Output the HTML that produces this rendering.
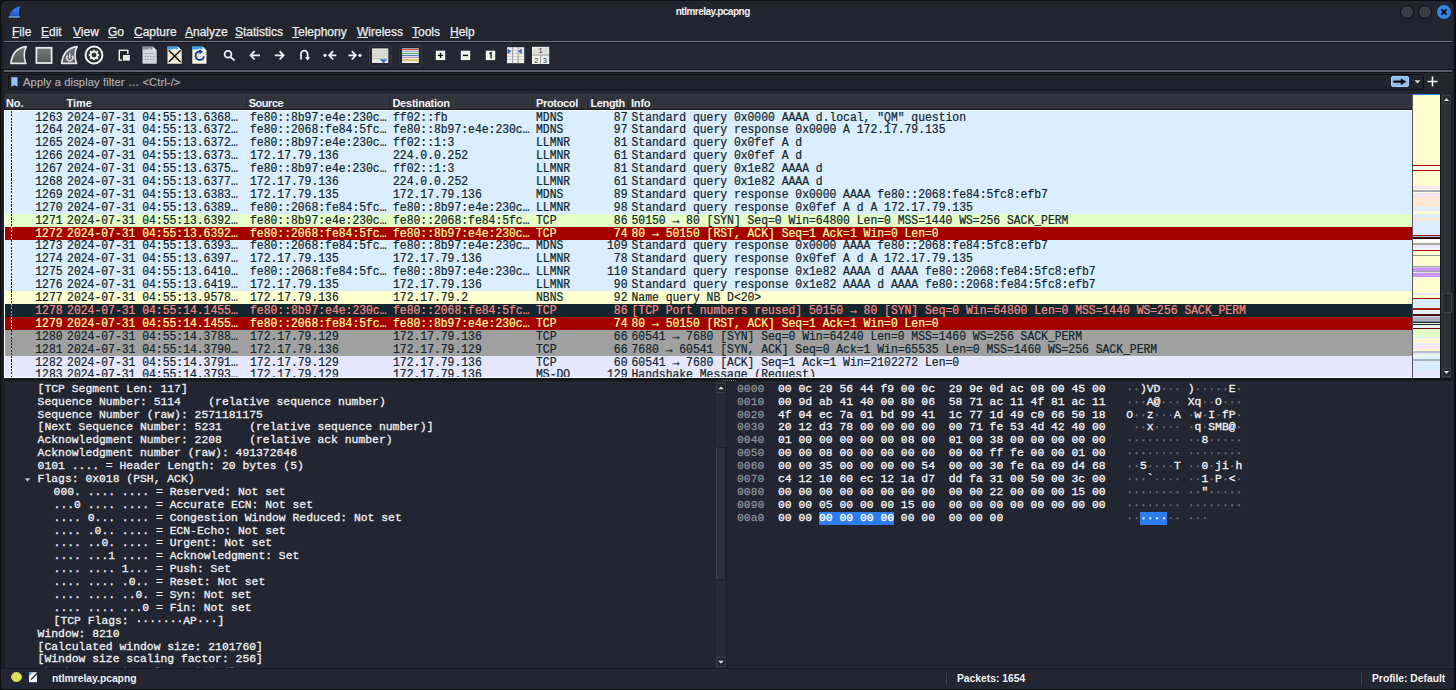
<!DOCTYPE html><html><head><meta charset="utf-8"><style>
*{margin:0;padding:0;box-sizing:border-box}
html,body{width:1456px;height:690px;overflow:hidden;background:#0d0e11}
body{position:relative;font-family:"Liberation Sans",sans-serif}
.a{position:absolute}
.win{position:absolute;left:1px;top:1px;width:1453px;height:688px;background:#22242e;border-radius:5px 5px 3px 3px;overflow:hidden}
.mono{font-family:"Liberation Mono",monospace;font-size:11.39px;white-space:pre;-webkit-text-stroke:0.22px currentColor}
.menu span{position:absolute;top:25px;font-size:12px;color:#eceef2;line-height:14px;-webkit-text-stroke:0.25px #eceef2}
.menu u{text-decoration:none}
.hdr{position:absolute;top:94px;height:16px;background:#31333d;border-top:1px solid #3d3f48;border-bottom:1px solid #17181d}
.hdr span{position:absolute;top:1px;font-size:11.5px;color:#f4f4f6;line-height:14px}
.hsep{position:absolute;top:95px;width:1px;height:14px;background:#272931}
.row{position:absolute;left:5px;width:1407px;height:12.89px}
.row span{position:absolute;transform:scaleY(1.06);transform-origin:0 70%;top:0.6px;line-height:12.89px}
.r{text-align:right}
.asc i{font-style:normal;color:#6e7076}
.sy{-webkit-text-stroke:0.3px currentColor}
</style></head><body>
<div class="win"></div>
<div class="a" style="left:1px;top:24px;width:2px;height:660px;background:#1c1d24"></div>

<div class="a" style="left:675.7px;top:5px;font-size:10px;letter-spacing:-0.5px;font-weight:bold;color:#f2f2f4;line-height:13px">ntlmrelay.pcapng</div>
<div class="a" style="left:1400px;top:5px;width:14px;height:14px;border-radius:50%;background:#3a3c46;border:1.2px solid #0e0f12"></div>
<div class="a" style="left:1418.4px;top:5px;width:14px;height:14px;border-radius:50%;background:#3a3c46;border:1.2px solid #0e0f12"></div>
<div class="a" style="left:1436.8px;top:5px;width:14px;height:14px;border-radius:50%;background:#3584e4"></div>
<svg class="a" style="left:1436.8px;top:5px" width="14" height="14"><path d="M4.4 4.4L9.6 9.6M9.6 4.4L4.4 9.6" stroke="#0b0c10" stroke-width="1.8"/></svg>
<svg class="a" style="left:0;top:0" width="30" height="22" viewBox="0 0 30 22"><defs><linearGradient id="gl" x1="0" y1="0" x2="0" y2="1"><stop offset="0" stop-color="#3a8cf0"/><stop offset="1" stop-color="#1a50c0"/></linearGradient></defs><path d="M20.6 5.8 C14.5 6.8 9.6 11 8.4 17.8 L20.2 17.8 C19.2 14 19.2 9.6 20.6 5.8Z" fill="url(#gl)" stroke="#0d0e12" stroke-width="0.6"/><path d="M8.8 16.6 L19.9 16.6 L20.1 17.6 L8.6 17.6Z" fill="#a6c8f5"/></svg>
<div class="menu">
<span style="left:12px">File</span>
<div class="a" style="left:12px;top:37px;width:7.3px;height:1px;background:#e4e6ea"></div>
<span style="left:41px">Edit</span>
<div class="a" style="left:41px;top:37px;width:8.0px;height:1px;background:#e4e6ea"></div>
<span style="left:73px">View</span>
<div class="a" style="left:73px;top:37px;width:8.0px;height:1px;background:#e4e6ea"></div>
<span style="left:108px">Go</span>
<div class="a" style="left:108px;top:37px;width:9.3px;height:1px;background:#e4e6ea"></div>
<span style="left:134px">Capture</span>
<div class="a" style="left:134px;top:37px;width:8.7px;height:1px;background:#e4e6ea"></div>
<span style="left:185px">Analyze</span>
<div class="a" style="left:185px;top:37px;width:8.0px;height:1px;background:#e4e6ea"></div>
<span style="left:235px">Statistics</span>
<div class="a" style="left:235px;top:37px;width:8.0px;height:1px;background:#e4e6ea"></div>
<span style="left:292px">Telephony</span>
<div class="a" style="left:292px;top:37px;width:7.3px;height:1px;background:#e4e6ea"></div>
<span style="left:357px">Wireless</span>
<div class="a" style="left:357px;top:37px;width:11.3px;height:1px;background:#e4e6ea"></div>
<span style="left:412px">Tools</span>
<div class="a" style="left:412px;top:37px;width:7.3px;height:1px;background:#e4e6ea"></div>
<span style="left:450px">Help</span>
<div class="a" style="left:450px;top:37px;width:8.7px;height:1px;background:#e4e6ea"></div>
</div>
<div class="a" style="left:4px;top:42px;width:1448px;height:28px;background:#242632"></div>
<div class="a" style="left:4px;top:41px;width:1448px;height:1px;background:#74767c"></div>
<div class="a" style="left:4px;top:42px;width:1448px;height:1px;background:#17181f"></div>
<div class="a" style="left:4px;top:69px;width:1448px;height:1px;background:#16171c"></div>
<div class="a" style="left:4px;top:70px;width:1448px;height:2px;background:#5a5d64"></div>
<div class="a" style="left:4px;top:72px;width:1448px;height:1px;background:#131419"></div>
<svg class="a" style="left:0;top:0" width="560" height="72"><defs><linearGradient id="gf" x1="0" y1="0" x2="0" y2="1"><stop offset="0" stop-color="#78797e"/><stop offset="1" stop-color="#545559"/></linearGradient></defs><path d="M10.9 63.4 C11.8 54 17 47.6 26.4 46.6 C23.8 51 23.4 58 25.8 63.4 Z" fill="url(#gf)" stroke="#e8e8ec" stroke-width="1.6" stroke-linejoin="round"/><rect x="36.4" y="47.8" width="15.2" height="15.2" fill="url(#gf)" stroke="#e8e8ec" stroke-width="1.8"/><path d="M61.699999999999996 63.4 C62.599999999999994 54 67.8 47.6 77.19999999999999 46.6 C74.6 51 74.2 58 76.6 63.4 Z" fill="url(#gf)" stroke="#e8e8ec" stroke-width="1.6" stroke-linejoin="round"/><path d="M67.6 55.6 A3.1 3.1 0 1 0 72.2 55.8" fill="none" stroke="#e8e8ec" stroke-width="1.4"/><path d="M69.8 53.6 V58.4" stroke="#e8e8ec" stroke-width="1.4"/><circle cx="94" cy="55" r="8.4" fill="none" stroke="#f4f4f6" stroke-width="2.0"/><polygon points="99.59,53.87 99.59,56.13 98.02,56.51 97.92,56.77 98.75,58.15 97.15,59.75 95.77,58.92 95.51,59.02 95.13,60.59 92.87,60.59 92.49,59.02 92.23,58.92 90.85,59.75 89.25,58.15 90.08,56.77 89.98,56.51 88.41,56.13 88.41,53.87 89.98,53.49 90.08,53.23 89.25,51.85 90.85,50.25 92.23,51.08 92.49,50.98 92.87,49.41 95.13,49.41 95.51,50.98 95.77,51.08 97.15,50.25 98.75,51.85 97.92,53.23 98.02,53.49" fill="#f0f0f2" stroke="#15161b" stroke-width="0.5"/><circle cx="94" cy="55" r="2.1" fill="#2e2e30" stroke="#111" stroke-width="0.6"/><rect x="119.3" y="50.3" width="8.5" height="9.8" fill="none" stroke="#f6f6f6" stroke-width="1.4"/><rect x="122.5" y="54.5" width="7.8" height="6.6" fill="#e8e8e6" stroke="#111" stroke-width="0.8"/><path d="M142.2 46.6 H152.79999999999998 L157.0 50.8 V64 H142.2Z" fill="#d2d3db" stroke="#15161b" stroke-width="0.5"/><path d="M142.2 46.6 H152.79999999999998 L154.79999999999998 48.6 L151.2 49.4 L149.7 48.2 L147.7 49.6 H142.2Z" fill="#8d8f98"/><path d="M152.79999999999998 46.6 L157.0 50.8 H152.79999999999998Z" fill="#e8e9ee"/><path d="M144.8 53.5 H155" stroke="#9c9ea6" stroke-width="1.2" stroke-dasharray="1.6 1"/><path d="M144.8 56.5 H155" stroke="#9c9ea6" stroke-width="1.2" stroke-dasharray="1.6 1"/><path d="M144.8 59.5 H155" stroke="#9c9ea6" stroke-width="1.2" stroke-dasharray="1.6 1"/><path d="M167.2 46.6 H177.79999999999998 L182.0 50.8 V64 H167.2Z" fill="#f5f2e0" stroke="#15161b" stroke-width="0.5"/><path d="M167.2 46.6 H177.79999999999998 L179.79999999999998 48.6 L176.2 49.4 L174.7 48.2 L172.7 49.6 H167.2Z" fill="#3aa2ec"/><path d="M177.79999999999998 46.6 L182.0 50.8 H177.79999999999998Z" fill="#ffffff"/><path d="M169.6 53.5 H180" stroke="#c8c6b8" stroke-width="1" stroke-dasharray="1.6 1"/><path d="M169.6 56.5 H180" stroke="#c8c6b8" stroke-width="1" stroke-dasharray="1.6 1"/><path d="M169.6 59.5 H180" stroke="#c8c6b8" stroke-width="1" stroke-dasharray="1.6 1"/><path d="M168.8 50.2 L180.6 62 M180.6 50.2 L168.8 62" stroke="#111" stroke-width="1.5"/><path d="M192 46.6 H202.6 L206.8 50.8 V64 H192Z" fill="#f5f2e0" stroke="#15161b" stroke-width="0.5"/><path d="M192 46.6 H202.6 L204.6 48.6 L201 49.4 L199.5 48.2 L197.5 49.6 H192Z" fill="#3aa2ec"/><path d="M202.6 46.6 L206.8 50.8 H202.6Z" fill="#ffffff"/><path d="M194.4 53.5 H204.8" stroke="#c8c6b8" stroke-width="1" stroke-dasharray="1.6 1"/><path d="M194.4 56.5 H204.8" stroke="#c8c6b8" stroke-width="1" stroke-dasharray="1.6 1"/><path d="M194.4 59.5 H204.8" stroke="#c8c6b8" stroke-width="1" stroke-dasharray="1.6 1"/><path d="M201.2 51.6 A4.3 4.3 0 1 0 204 56.4" fill="none" stroke="#183e92" stroke-width="1.8"/><path d="M199 49.6 L203.2 51.4 L199.6 54.2Z" fill="#183e92"/><circle cx="228" cy="54.3" r="3.4" fill="none" stroke="#f2f2f4" stroke-width="1.8"/><path d="M230.6 57 L234.6 60.6" stroke="#f2f2f4" stroke-width="1.7"/><path d="M260 55.3 H250.8 M254.6 51.099999999999994 L250.6 55.3 L254.6 59.5" fill="none" stroke="#f2f2f4" stroke-width="1.8"/><path d="M274.8 55.3 H283.4 M279.59999999999997 51.099999999999994 L283.59999999999997 55.3 L279.59999999999997 59.5" fill="none" stroke="#f2f2f4" stroke-width="1.8"/><path d="M301 59.5 V54 A3.3 3.3 0 0 1 307.6 54 V58" fill="none" stroke="#f2f2f4" stroke-width="1.8"/><path d="M305 57.3 H310.2 L307.6 60.6Z" fill="#f2f2f4"/><circle cx="325" cy="55.3" r="1.6" fill="#f2f2f4"/><path d="M336.4 55.3 H329.3 M333.1 51.099999999999994 L329.1 55.3 L333.1 59.5" fill="none" stroke="#f2f2f4" stroke-width="1.8"/><path d="M348.5 55.3 H355.59999999999997 M351.79999999999995 51.099999999999994 L355.79999999999995 55.3 L351.79999999999995 59.5" fill="none" stroke="#f2f2f4" stroke-width="1.8"/><circle cx="360" cy="55.3" r="1.6" fill="#f2f2f4"/><rect x="369.5" y="45.8" width="21.5" height="20.5" rx="2" fill="#23252f" stroke="#3b3d46" stroke-width="1"/><rect x="372" y="48.4" width="16.3" height="14.6" fill="#e6e6e0"/><path d="M372 51 H388.3" stroke="#b8b8b2" stroke-width="0.7"/><path d="M372 53.5 H388.3" stroke="#b8b8b2" stroke-width="0.7"/><path d="M372 56 H388.3" stroke="#b8b8b2" stroke-width="0.7"/><path d="M372 58.5 H388.3" stroke="#b8b8b2" stroke-width="0.7"/><path d="M379.8 59.2 H387.2 L383.5 63.3Z" fill="#2e6dc4"/><rect x="399.7" y="45.8" width="21.5" height="20.5" rx="2" fill="#23252f" stroke="#3b3d46" stroke-width="1"/><rect x="402" y="48.4" width="16.8" height="14.6" fill="#f2f2ee"/><path d="M402 49.6 H418.8" stroke="#e0453a" stroke-width="1.1"/><path d="M402 51.4 H418.8" stroke="#8fb4e0" stroke-width="1.1"/><path d="M402 53.4 H418.8" stroke="#5ab04a" stroke-width="1.1"/><path d="M402 55.4 H418.8" stroke="#4a7ad0" stroke-width="1.1"/><path d="M402 57.3 H418.8" stroke="#b08ad0" stroke-width="1.1"/><path d="M402 59.5 H418.8" stroke="#d8c068" stroke-width="1.1"/><path d="M402 60.8 H418.8" stroke="#d8c068" stroke-width="1.1"/><rect x="435.8" y="50.7" width="9.4" height="9.4" fill="#f4f4f2"/><path d="M440.5 52.8 V58 M437.90000000000003 55.4 H443.1" stroke="#111" stroke-width="1.4"/><rect x="460.8" y="50.7" width="9.4" height="9.4" fill="#f4f4f2"/><path d="M462.90000000000003 55.4 H468.1" stroke="#111" stroke-width="1.5"/><rect x="485.8" y="50.7" width="9.4" height="9.4" fill="#f4f4f2"/><path d="M489.40000000000003 53.6 L491.0 52.6 V58.4" fill="none" stroke="#111" stroke-width="1.3"/><rect x="507" y="47.2" width="17.2" height="16" fill="#eeeeea"/><path d="M507 50.5 H524.2" stroke="#c0c0bc" stroke-width="0.6"/><path d="M507 53.5 H524.2" stroke="#c0c0bc" stroke-width="0.6"/><path d="M507 56.5 H524.2" stroke="#c0c0bc" stroke-width="0.6"/><path d="M507 59.5 H524.2" stroke="#c0c0bc" stroke-width="0.6"/><path d="M512.6 47.2 V63.2 M518.2 47.2 V63.2" stroke="#8a8a88" stroke-width="0.8"/><path d="M507.6 48.6 L511.2 51.3 L507.6 54Z M521.8 48.6 L518.2 51.3 L521.8 54Z" fill="#2a64c0"/><rect x="532" y="46.8" width="17.2" height="17.2" fill="#f0f0ee"/><rect x="532.8" y="47.6" width="15.6" height="6.6" fill="#dcdcda"/><path d="M532 55 H549.2 M540.6 55 V64" stroke="#8a8a88" stroke-width="0.9"/><text x="540.6" y="53.3" font-size="7.5" text-anchor="middle" fill="#333" font-family="Liberation Sans">1</text><text x="536.4" y="62.6" font-size="7.5" text-anchor="middle" fill="#333" font-family="Liberation Sans">2</text><text x="544.9" y="62.6" font-size="7.5" text-anchor="middle" fill="#333" font-family="Liberation Sans">3</text></svg>
<div class="a" style="left:7.5px;top:73.5px;width:1416px;height:16px;background:#22242d;border:1px solid #101116;border-radius:3px"></div>
<div class="a" style="left:9px;top:75px;width:12px;height:14px;border-right:1px solid #15161c"></div>
<svg class="a" style="left:11px;top:77px" width="7" height="10"><path d="M0.3 0.3H6.5V9.6L3.4 8.2L0.3 9.6Z" fill="#92c0f2"/></svg>
<div class="a" style="left:23px;top:75px;font-size:11.2px;letter-spacing:0.1px;color:#aeb0b6;line-height:14px;-webkit-text-stroke:0.15px #aeb0b6">Apply a display filter … &lt;Ctrl-/&gt;</div>
<div class="a" style="left:1391px;top:76.3px;width:18px;height:10.6px;background:#92bbe8;border:1px solid #a6d0fa;border-radius:2px"></div>
<svg class="a" style="left:1386px;top:72px" width="40" height="20"><path d="M8.3 9.6H15.6" stroke="#0b0c10" stroke-width="2.4" stroke-linecap="round"/><path d="M15 7 L19.9 9.6 L15 12.6Z" fill="#0b0c10" stroke="#0b0c10" stroke-width="0.6" stroke-linejoin="round"/></svg>
<svg class="a" style="left:1413.5px;top:80px" width="7" height="4"><path d="M0.5 0.3H6.5L3.5 3.5Z" fill="#d8d9dc"/></svg>
<svg class="a" style="left:1427px;top:76px" width="11" height="11"><path d="M5.5 0.5V10.5M0.5 5.5H10.5" stroke="#f0f0f2" stroke-width="1.6"/></svg>
<div class="hdr" style="left:5px;width:1407px"></div>
<div class="a" style="left:6px;top:95.5px;font-size:11px;letter-spacing:-0.07px;font-weight:bold;color:#f4f4f6;line-height:14px">No.</div>
<div class="a" style="left:66.6px;top:95.5px;font-size:11px;letter-spacing:-0.1px;font-weight:bold;color:#f4f4f6;line-height:14px">Time</div>
<div class="a" style="left:248.7px;top:95.5px;font-size:11px;letter-spacing:-0.45px;font-weight:bold;color:#f4f4f6;line-height:14px">Source</div>
<div class="a" style="left:392.4px;top:95.5px;font-size:11px;letter-spacing:-0.23px;font-weight:bold;color:#f4f4f6;line-height:14px">Destination</div>
<div class="a" style="left:536px;top:95.5px;font-size:11px;letter-spacing:-0.33px;font-weight:bold;color:#f4f4f6;line-height:14px">Protocol</div>
<div class="a" style="left:590.5px;top:95.5px;font-size:11px;letter-spacing:-0.38px;font-weight:bold;color:#f4f4f6;line-height:14px">Length</div>
<div class="a" style="left:631px;top:95.5px;font-size:11px;letter-spacing:-0.2px;font-weight:bold;color:#f4f4f6;line-height:14px">Info</div>
<div class="hsep" style="left:64px"></div>
<div class="hsep" style="left:246px"></div>
<div class="hsep" style="left:389px"></div>
<div class="hsep" style="left:532px"></div>
<div class="hsep" style="left:587px"></div>
<div class="hsep" style="left:628px"></div>
<div class="a" style="left:4px;top:110px;width:1409px;height:268px;background:#ffffff"></div>
<div class="a" style="left:5px;top:111px;width:1407px;height:266px;overflow:hidden">
<div class="row mono" style="left:0;top:0.00px;background:#daeeff;color:#12272e"><span class="r" style="left:0;width:57.6px">1263</span><span style="left:62.1px">2024-07-31 04:55:13.6368…</span><span style="left:245px">fe80::8b97:e4e:230c…</span><span style="left:388px">ff02::fb</span><span style="left:531px">MDNS</span><span class="r" style="left:585px;width:37.5px">87</span><span style="left:626.5px">Standard query 0x0000 AAAA d.local, "QM" question</span><i style="position:absolute;left:6px;top:0;width:1px;height:100%;background:repeating-linear-gradient(to bottom,#12272e 0 2.2px,transparent 2.2px 3.3px)"></i></div>
<div class="row mono" style="left:0;top:12.89px;background:#daeeff;color:#12272e"><span class="r" style="left:0;width:57.6px">1264</span><span style="left:62.1px">2024-07-31 04:55:13.6372…</span><span style="left:245px">fe80::2068:fe84:5fc…</span><span style="left:388px">fe80::8b97:e4e:230c…</span><span style="left:531px">MDNS</span><span class="r" style="left:585px;width:37.5px">97</span><span style="left:626.5px">Standard query response 0x0000 A 172.17.79.135</span><i style="position:absolute;left:6px;top:0;width:1px;height:100%;background:repeating-linear-gradient(to bottom,#12272e 0 2.2px,transparent 2.2px 3.3px)"></i></div>
<div class="row mono" style="left:0;top:25.78px;background:#daeeff;color:#12272e"><span class="r" style="left:0;width:57.6px">1265</span><span style="left:62.1px">2024-07-31 04:55:13.6372…</span><span style="left:245px">fe80::8b97:e4e:230c…</span><span style="left:388px">ff02::1:3</span><span style="left:531px">LLMNR</span><span class="r" style="left:585px;width:37.5px">81</span><span style="left:626.5px">Standard query 0x0fef A d</span><i style="position:absolute;left:6px;top:0;width:1px;height:100%;background:repeating-linear-gradient(to bottom,#12272e 0 2.2px,transparent 2.2px 3.3px)"></i></div>
<div class="row mono" style="left:0;top:38.67px;background:#daeeff;color:#12272e"><span class="r" style="left:0;width:57.6px">1266</span><span style="left:62.1px">2024-07-31 04:55:13.6373…</span><span style="left:245px">172.17.79.136</span><span style="left:388px">224.0.0.252</span><span style="left:531px">LLMNR</span><span class="r" style="left:585px;width:37.5px">61</span><span style="left:626.5px">Standard query 0x0fef A d</span><i style="position:absolute;left:6px;top:0;width:1px;height:100%;background:repeating-linear-gradient(to bottom,#12272e 0 2.2px,transparent 2.2px 3.3px)"></i></div>
<div class="row mono" style="left:0;top:51.56px;background:#daeeff;color:#12272e"><span class="r" style="left:0;width:57.6px">1267</span><span style="left:62.1px">2024-07-31 04:55:13.6375…</span><span style="left:245px">fe80::8b97:e4e:230c…</span><span style="left:388px">ff02::1:3</span><span style="left:531px">LLMNR</span><span class="r" style="left:585px;width:37.5px">81</span><span style="left:626.5px">Standard query 0x1e82 AAAA d</span><i style="position:absolute;left:6px;top:0;width:1px;height:100%;background:repeating-linear-gradient(to bottom,#12272e 0 2.2px,transparent 2.2px 3.3px)"></i></div>
<div class="row mono" style="left:0;top:64.45px;background:#daeeff;color:#12272e"><span class="r" style="left:0;width:57.6px">1268</span><span style="left:62.1px">2024-07-31 04:55:13.6377…</span><span style="left:245px">172.17.79.136</span><span style="left:388px">224.0.0.252</span><span style="left:531px">LLMNR</span><span class="r" style="left:585px;width:37.5px">61</span><span style="left:626.5px">Standard query 0x1e82 AAAA d</span><i style="position:absolute;left:6px;top:0;width:1px;height:100%;background:repeating-linear-gradient(to bottom,#12272e 0 2.2px,transparent 2.2px 3.3px)"></i></div>
<div class="row mono" style="left:0;top:77.34px;background:#daeeff;color:#12272e"><span class="r" style="left:0;width:57.6px">1269</span><span style="left:62.1px">2024-07-31 04:55:13.6383…</span><span style="left:245px">172.17.79.135</span><span style="left:388px">172.17.79.136</span><span style="left:531px">MDNS</span><span class="r" style="left:585px;width:37.5px">89</span><span style="left:626.5px">Standard query response 0x0000 AAAA fe80::2068:fe84:5fc8:efb7</span><i style="position:absolute;left:6px;top:0;width:1px;height:100%;background:repeating-linear-gradient(to bottom,#12272e 0 2.2px,transparent 2.2px 3.3px)"></i></div>
<div class="row mono" style="left:0;top:90.23px;background:#daeeff;color:#12272e"><span class="r" style="left:0;width:57.6px">1270</span><span style="left:62.1px">2024-07-31 04:55:13.6389…</span><span style="left:245px">fe80::2068:fe84:5fc…</span><span style="left:388px">fe80::8b97:e4e:230c…</span><span style="left:531px">LLMNR</span><span class="r" style="left:585px;width:37.5px">98</span><span style="left:626.5px">Standard query response 0x0fef A d A 172.17.79.135</span><i style="position:absolute;left:6px;top:0;width:1px;height:100%;background:repeating-linear-gradient(to bottom,#12272e 0 2.2px,transparent 2.2px 3.3px)"></i></div>
<div class="row mono" style="left:0;top:103.12px;background:#e4ffc7;color:#12272e"><span class="r" style="left:0;width:57.6px">1271</span><span style="left:62.1px">2024-07-31 04:55:13.6392…</span><span style="left:245px">fe80::8b97:e4e:230c…</span><span style="left:388px">fe80::2068:fe84:5fc…</span><span style="left:531px">TCP</span><span class="r" style="left:585px;width:37.5px">86</span><span style="left:626.5px">50150 → 80 [SYN] Seq=0 Win=64800 Len=0 MSS=1440 WS=256 SACK_PERM</span><i style="position:absolute;left:6px;top:0;width:1px;height:100%;background:repeating-linear-gradient(to bottom,#12272e 0 2.2px,transparent 2.2px 3.3px)"></i></div>
<div class="row mono" style="left:0;top:116.01px;background:#a40000;color:#fffc9c"><span class="r" style="left:0;width:57.6px">1272</span><span style="left:62.1px">2024-07-31 04:55:13.6392…</span><span style="left:245px">fe80::2068:fe84:5fc…</span><span style="left:388px">fe80::8b97:e4e:230c…</span><span style="left:531px">TCP</span><span class="r" style="left:585px;width:37.5px">74</span><span style="left:626.5px">80 → 50150 [RST, ACK] Seq=1 Ack=1 Win=0 Len=0</span><i style="position:absolute;left:6px;top:0;width:1px;height:100%;background:repeating-linear-gradient(to bottom,#fffc9c 0 2.2px,transparent 2.2px 3.3px)"></i></div>
<div class="row mono" style="left:0;top:128.90px;background:#daeeff;color:#12272e"><span class="r" style="left:0;width:57.6px">1273</span><span style="left:62.1px">2024-07-31 04:55:13.6393…</span><span style="left:245px">fe80::2068:fe84:5fc…</span><span style="left:388px">fe80::8b97:e4e:230c…</span><span style="left:531px">MDNS</span><span class="r" style="left:585px;width:37.5px">109</span><span style="left:626.5px">Standard query response 0x0000 AAAA fe80::2068:fe84:5fc8:efb7</span><i style="position:absolute;left:6px;top:0;width:1px;height:100%;background:repeating-linear-gradient(to bottom,#12272e 0 2.2px,transparent 2.2px 3.3px)"></i></div>
<div class="row mono" style="left:0;top:141.79px;background:#daeeff;color:#12272e"><span class="r" style="left:0;width:57.6px">1274</span><span style="left:62.1px">2024-07-31 04:55:13.6397…</span><span style="left:245px">172.17.79.135</span><span style="left:388px">172.17.79.136</span><span style="left:531px">LLMNR</span><span class="r" style="left:585px;width:37.5px">78</span><span style="left:626.5px">Standard query response 0x0fef A d A 172.17.79.135</span><i style="position:absolute;left:6px;top:0;width:1px;height:100%;background:repeating-linear-gradient(to bottom,#12272e 0 2.2px,transparent 2.2px 3.3px)"></i></div>
<div class="row mono" style="left:0;top:154.68px;background:#daeeff;color:#12272e"><span class="r" style="left:0;width:57.6px">1275</span><span style="left:62.1px">2024-07-31 04:55:13.6410…</span><span style="left:245px">fe80::2068:fe84:5fc…</span><span style="left:388px">fe80::8b97:e4e:230c…</span><span style="left:531px">LLMNR</span><span class="r" style="left:585px;width:37.5px">110</span><span style="left:626.5px">Standard query response 0x1e82 AAAA d AAAA fe80::2068:fe84:5fc8:efb7</span><i style="position:absolute;left:6px;top:0;width:1px;height:100%;background:repeating-linear-gradient(to bottom,#12272e 0 2.2px,transparent 2.2px 3.3px)"></i></div>
<div class="row mono" style="left:0;top:167.57px;background:#daeeff;color:#12272e"><span class="r" style="left:0;width:57.6px">1276</span><span style="left:62.1px">2024-07-31 04:55:13.6419…</span><span style="left:245px">172.17.79.135</span><span style="left:388px">172.17.79.136</span><span style="left:531px">LLMNR</span><span class="r" style="left:585px;width:37.5px">90</span><span style="left:626.5px">Standard query response 0x1e82 AAAA d AAAA fe80::2068:fe84:5fc8:efb7</span><i style="position:absolute;left:6px;top:0;width:1px;height:100%;background:repeating-linear-gradient(to bottom,#12272e 0 2.2px,transparent 2.2px 3.3px)"></i></div>
<div class="row mono" style="left:0;top:180.46px;background:#feffd0;color:#12272e"><span class="r" style="left:0;width:57.6px">1277</span><span style="left:62.1px">2024-07-31 04:55:13.9578…</span><span style="left:245px">172.17.79.136</span><span style="left:388px">172.17.79.2</span><span style="left:531px">NBNS</span><span class="r" style="left:585px;width:37.5px">92</span><span style="left:626.5px">Name query NB D&lt;20&gt;</span><i style="position:absolute;left:6px;top:0;width:1px;height:100%;background:repeating-linear-gradient(to bottom,#12272e 0 2.2px,transparent 2.2px 3.3px)"></i></div>
<div class="row mono" style="left:0;top:193.35px;background:#12272e;color:#f78787"><span class="r" style="left:0;width:57.6px">1278</span><span style="left:62.1px">2024-07-31 04:55:14.1455…</span><span style="left:245px">fe80::8b97:e4e:230c…</span><span style="left:388px">fe80::2068:fe84:5fc…</span><span style="left:531px">TCP</span><span class="r" style="left:585px;width:37.5px">86</span><span style="left:626.5px">[TCP Port numbers reused] 50150 → 80 [SYN] Seq=0 Win=64800 Len=0 MSS=1440 WS=256 SACK_PERM</span><i style="position:absolute;left:6px;top:0;width:1px;height:100%;background:repeating-linear-gradient(to bottom,#f78787 0 2.2px,transparent 2.2px 3.3px)"></i></div>
<div class="row mono" style="left:0;top:206.24px;background:#a40000;color:#fffc9c"><span class="r" style="left:0;width:57.6px">1279</span><span style="left:62.1px">2024-07-31 04:55:14.1455…</span><span style="left:245px">fe80::2068:fe84:5fc…</span><span style="left:388px">fe80::8b97:e4e:230c…</span><span style="left:531px">TCP</span><span class="r" style="left:585px;width:37.5px">74</span><span style="left:626.5px">80 → 50150 [RST, ACK] Seq=1 Ack=1 Win=0 Len=0</span><i style="position:absolute;left:6px;top:0;width:1px;height:100%;background:repeating-linear-gradient(to bottom,#fffc9c 0 2.2px,transparent 2.2px 3.3px)"></i></div>
<div class="row mono" style="left:0;top:219.13px;background:#a0a0a0;color:#12272e"><span class="r" style="left:0;width:57.6px">1280</span><span style="left:62.1px">2024-07-31 04:55:14.3788…</span><span style="left:245px">172.17.79.129</span><span style="left:388px">172.17.79.136</span><span style="left:531px">TCP</span><span class="r" style="left:585px;width:37.5px">66</span><span style="left:626.5px">60541 → 7680 [SYN] Seq=0 Win=64240 Len=0 MSS=1460 WS=256 SACK_PERM</span><i style="position:absolute;left:6px;top:0;width:1px;height:100%;background:repeating-linear-gradient(to bottom,#12272e 0 2.2px,transparent 2.2px 3.3px)"></i></div>
<div class="row mono" style="left:0;top:232.02px;background:#a0a0a0;color:#12272e"><span class="r" style="left:0;width:57.6px">1281</span><span style="left:62.1px">2024-07-31 04:55:14.3790…</span><span style="left:245px">172.17.79.136</span><span style="left:388px">172.17.79.129</span><span style="left:531px">TCP</span><span class="r" style="left:585px;width:37.5px">66</span><span style="left:626.5px">7680 → 60541 [SYN, ACK] Seq=0 Ack=1 Win=65535 Len=0 MSS=1460 WS=256 SACK_PERM</span><i style="position:absolute;left:6px;top:0;width:1px;height:100%;background:repeating-linear-gradient(to bottom,#12272e 0 2.2px,transparent 2.2px 3.3px)"></i></div>
<div class="row mono" style="left:0;top:244.91px;background:#e7e6ff;color:#12272e"><span class="r" style="left:0;width:57.6px">1282</span><span style="left:62.1px">2024-07-31 04:55:14.3791…</span><span style="left:245px">172.17.79.129</span><span style="left:388px">172.17.79.136</span><span style="left:531px">TCP</span><span class="r" style="left:585px;width:37.5px">60</span><span style="left:626.5px">60541 → 7680 [ACK] Seq=1 Ack=1 Win=2102272 Len=0</span><i style="position:absolute;left:6px;top:0;width:1px;height:100%;background:repeating-linear-gradient(to bottom,#12272e 0 2.2px,transparent 2.2px 3.3px)"></i></div>
<div class="row mono" style="left:0;top:257.80px;background:#e7e6ff;color:#12272e"><span class="r" style="left:0;width:57.6px">1283</span><span style="left:62.1px">2024-07-31 04:55:14.3793…</span><span style="left:245px">172.17.79.129</span><span style="left:388px">172.17.79.136</span><span style="left:531px">MS-DO</span><span class="r" style="left:585px;width:37.5px">129</span><span style="left:626.5px">Handshake Message (Request)</span><i style="position:absolute;left:6px;top:0;width:1px;height:100%;background:repeating-linear-gradient(to bottom,#12272e 0 2.2px,transparent 2.2px 3.3px)"></i></div>
</div>
<div class="a" style="left:1412px;top:94px;width:1px;height:284px;background:#55575c"></div>
<svg class="a" style="left:1413px;top:94px" width="27" height="284"><rect x="0" y="0" width="28" height="284" fill="#fdfdd0"/><rect x="0" y="0" width="28" height="1.2" fill="#3584e4"/><rect x="0" y="1" width="28" height="70" fill="#fdfdd0"/><rect x="0" y="71" width="28" height="1" fill="#a40000"/><rect x="0" y="72" width="28" height="4" fill="#fafae8"/><rect x="0" y="76" width="28" height="1" fill="#a40000"/><rect x="0" y="92" width="28" height="3" fill="#f4e6ee"/><rect x="0" y="96" width="28" height="2" fill="#a8a8b4"/><rect x="0" y="99" width="28" height="2" fill="#ece6f8"/><rect x="0" y="101" width="28" height="3" fill="#fce4e4"/><rect x="0" y="104" width="28" height="9" fill="#fde8d2"/><rect x="0" y="113" width="28" height="2" fill="#daeeff"/><rect x="0" y="115" width="28" height="2" fill="#e7e6ff"/><rect x="0" y="117" width="28" height="3" fill="#fdfdd0"/><rect x="0" y="120" width="28" height="4" fill="#daeeff"/><rect x="0" y="124" width="28" height="3" fill="#fde8d2"/><rect x="0" y="127" width="28" height="1" fill="#daeeff"/><rect x="0" y="128" width="28" height="13" fill="#daeeff"/><rect x="0" y="141" width="28" height="1" fill="#b01010"/><rect x="0" y="142" width="28" height="1" fill="#8cc8d8"/><rect x="0" y="143" width="28" height="1" fill="#5a0808"/><rect x="0" y="144" width="28" height="1" fill="#12080a"/><rect x="0" y="145" width="28" height="1" fill="#f8f8f8"/><rect x="0" y="146" width="28" height="3" fill="#fafaf0"/><rect x="0" y="149" width="28" height="2" fill="#a8a8a0"/><rect x="0" y="151" width="28" height="3" fill="#ece8ff"/><rect x="0" y="154" width="28" height="2" fill="#f4f4f8"/><rect x="0" y="156" width="28" height="1" fill="#b01010"/><rect x="0" y="157" width="28" height="4" fill="#fdfdd0"/><rect x="0" y="161" width="28" height="1" fill="#909098"/><rect x="0" y="162" width="28" height="10" fill="#fdfdd0"/><rect x="0" y="172" width="28" height="1" fill="#a0a0a0"/><rect x="0" y="173" width="28" height="1" fill="#d0c0e8"/><rect x="0" y="174" width="28" height="3" fill="#c797ff"/><rect x="0" y="177" width="28" height="1" fill="#a0a8a0"/><rect x="0" y="178" width="28" height="1" fill="#e8e0f0"/><rect x="0" y="179" width="28" height="4" fill="#c797ff"/><rect x="0" y="183" width="28" height="16" fill="#fdfdd0"/><rect x="0" y="199" width="28" height="2" fill="#e7e6ff"/><rect x="0" y="201" width="28" height="3" fill="#fdfdd0"/><rect x="0" y="204" width="28" height="1" fill="#a40000"/><rect x="0" y="205" width="28" height="9" fill="#daeeff"/><rect x="0" y="214" width="28" height="2" fill="#b02010"/><rect x="0" y="216" width="28" height="4" fill="#e4f4fa"/><rect x="0" y="220" width="28" height="2" fill="#5a0a0a"/><rect x="0" y="222" width="28" height="1" fill="#c8dcea"/><rect x="0" y="223" width="28" height="4" fill="#b0b0bc"/><rect x="0" y="227" width="28" height="1" fill="#6a8aa0"/><rect x="0" y="228" width="28" height="1" fill="#12272e"/><rect x="0" y="229" width="28" height="1" fill="#fdfdd0"/><rect x="0" y="230" width="28" height="1" fill="#12272e"/><rect x="0" y="231" width="28" height="3" fill="#e4f4fa"/><rect x="0" y="234" width="28" height="1" fill="#6a0a0a"/><rect x="0" y="235" width="28" height="8" fill="#e4ffc7"/><rect x="0" y="243" width="28" height="1" fill="#daeeff"/><rect x="0" y="244" width="28" height="5" fill="#fdf4d0"/><rect x="0" y="249" width="28" height="2" fill="#e8f0f0"/><rect x="0" y="251" width="28" height="4" fill="#fbe4f8"/><rect x="0" y="255" width="28" height="2" fill="#fdf4d0"/><rect x="0" y="257" width="28" height="2" fill="#b8b8c8"/><rect x="0" y="259" width="28" height="2" fill="#daeeff"/><rect x="0" y="261" width="28" height="1" fill="#fdf4d0"/><rect x="0" y="262" width="28" height="3" fill="#dff2ff"/><rect x="0" y="265" width="28" height="2" fill="#a8b0b8"/><rect x="0" y="267" width="28" height="9" fill="#daeeff"/><rect x="0" y="276" width="28" height="7" fill="#e7e6ff"/><rect x="0" y="283" width="28" height="1" fill="#f0f0f0"/></svg>
<div class="a" style="left:1440px;top:94px;width:1px;height:284px;background:#15161c"></div>
<div class="a" style="left:1441px;top:94px;width:11px;height:284px;background:#2d3039;border-right:1px solid #1b1c22"></div>
<div class="a" style="left:1442px;top:95px;width:9px;height:9px;background:#2a2c35;border:1px solid #3a3c45"></div>
<svg class="a" style="left:1442px;top:95px" width="9" height="9"><path d="M1.8 6 L4.5 3.3 L7.2 6Z" fill="#e8e8ea"/></svg>
<div class="a" style="left:1442px;top:292.5px;width:9.5px;height:20px;background:#272933;border:1px solid #3e4049"></div>
<div class="a" style="left:1442px;top:368px;width:9px;height:9px;background:#2a2c35;border:1px solid #3a3c45"></div>
<svg class="a" style="left:1442px;top:368px" width="9" height="9"><path d="M1.8 3 L4.5 5.7 L7.2 3Z" fill="#e8e8ea"/></svg>
<div class="a" style="left:4px;top:378px;width:1448px;height:2px;background:#17181e"></div>
<div class="a" style="left:4px;top:380px;width:713px;height:288px;background:#232531;border-left:1px solid #1a1b22;border-top:1px solid #15161c"></div>
<div class="a" style="left:5px;top:381px;width:711px;height:287px;overflow:hidden">
<div class="a mono sy" style="left:32.6px;top:1.80px;line-height:12.89px;color:#eeeff2">[TCP Segment Len: 117]</div>
<div class="a mono sy" style="left:32.6px;top:14.69px;line-height:12.89px;color:#eeeff2">Sequence Number: 5114    (relative sequence number)</div>
<div class="a mono sy" style="left:32.6px;top:27.58px;line-height:12.89px;color:#eeeff2">Sequence Number (raw): 2571181175</div>
<div class="a mono sy" style="left:32.6px;top:40.47px;line-height:12.89px;color:#eeeff2">[Next Sequence Number: 5231    (relative sequence number)]</div>
<div class="a mono sy" style="left:32.6px;top:53.36px;line-height:12.89px;color:#eeeff2">Acknowledgment Number: 2208    (relative ack number)</div>
<div class="a mono sy" style="left:32.6px;top:66.25px;line-height:12.89px;color:#eeeff2">Acknowledgment number (raw): 491372646</div>
<div class="a mono sy" style="left:32.6px;top:79.14px;line-height:12.89px;color:#eeeff2">0101 .... = Header Length: 20 bytes (5)</div>
<div class="a mono sy" style="left:32.6px;top:92.03px;line-height:12.89px;color:#eeeff2">Flags: 0x018 (PSH, ACK)</div>
<div class="a mono sy" style="left:48.6px;top:104.92px;line-height:12.89px;color:#eeeff2">000. .... .... = Reserved: Not set</div>
<div class="a mono sy" style="left:48.6px;top:117.81px;line-height:12.89px;color:#eeeff2">...0 .... .... = Accurate ECN: Not set</div>
<div class="a mono sy" style="left:48.6px;top:130.70px;line-height:12.89px;color:#eeeff2">.... 0... .... = Congestion Window Reduced: Not set</div>
<div class="a mono sy" style="left:48.6px;top:143.59px;line-height:12.89px;color:#eeeff2">.... .0.. .... = ECN-Echo: Not set</div>
<div class="a mono sy" style="left:48.6px;top:156.48px;line-height:12.89px;color:#eeeff2">.... ..0. .... = Urgent: Not set</div>
<div class="a mono sy" style="left:48.6px;top:169.37px;line-height:12.89px;color:#eeeff2">.... ...1 .... = Acknowledgment: Set</div>
<div class="a mono sy" style="left:48.6px;top:182.26px;line-height:12.89px;color:#eeeff2">.... .... 1... = Push: Set</div>
<div class="a mono sy" style="left:48.6px;top:195.15px;line-height:12.89px;color:#eeeff2">.... .... .0.. = Reset: Not set</div>
<div class="a mono sy" style="left:48.6px;top:208.04px;line-height:12.89px;color:#eeeff2">.... .... ..0. = Syn: Not set</div>
<div class="a mono sy" style="left:48.6px;top:220.93px;line-height:12.89px;color:#eeeff2">.... .... ...0 = Fin: Not set</div>
<div class="a mono sy" style="left:48.6px;top:233.82px;line-height:12.89px;color:#eeeff2">[TCP Flags: ·······AP···]</div>
<div class="a mono sy" style="left:32.6px;top:246.71px;line-height:12.89px;color:#eeeff2">Window: 8210</div>
<div class="a mono sy" style="left:32.6px;top:259.60px;line-height:12.89px;color:#eeeff2">[Calculated window size: 2101760]</div>
<div class="a mono sy" style="left:32.6px;top:272.49px;line-height:12.89px;color:#eeeff2">[Window size scaling factor: 256]</div>
<div class="a mono sy" style="left:32.6px;top:286.38px;line-height:12.89px;color:#eeeff2">Checksum: 0xd8a5 [unverified]</div>
</div>
<svg class="a" style="left:24px;top:476.7px" width="7" height="6"><path d="M0.8 1.2 H6.2 L3.5 4.4Z" fill="#c8c9cc"/></svg>
<div class="a" style="left:716px;top:381px;width:10px;height:287px;background:#2a2c35"></div>
<div class="a" style="left:716px;top:383px;width:10px;height:10px;background:#262830;border:1px solid #3a3c45"></div>
<svg class="a" style="left:716px;top:383px" width="10" height="10"><path d="M2.3 6.3 L5 3.6 L7.7 6.3Z" fill="#e8e8ea"/></svg>
<div class="a" style="left:716px;top:393px;width:10px;height:264px;background:#2a2c35"></div>
<div class="a" style="left:716px;top:446.5px;width:10px;height:133px;background:#2d3039;border:1px solid #1f2028;border-left:1px solid #454750"></div>
<div class="a" style="left:716px;top:657px;width:10px;height:10px;background:#262830;border:1px solid #3a3c45"></div>
<svg class="a" style="left:716px;top:657px" width="10" height="10"><path d="M2.3 3.7 L5 6.4 L7.7 3.7Z" fill="#e8e8ea"/></svg>
<div class="a" style="left:726px;top:381px;width:1px;height:287px;background:#1d1f27"></div>
<div class="a" style="left:728px;top:519px;width:0;height:11px;border-left:1px dotted #6a6c74"></div>
<div class="a" style="left:728px;top:380px;width:724px;height:288px;background:#232531;border-top:1px solid #15161c;border-right:1px solid #2c2e37;border-bottom:1px solid #2c2e37"></div>
<div class="a" style="left:723px;top:380px;width:13px;height:0;border-top:1px dotted #6a6c74"></div>
<div class="a mono sy" style="left:737px;top:382.80px;line-height:12.89px;color:#8c8d92">0000</div>
<div class="a mono sy" style="left:778px;top:382.80px;line-height:12.89px;color:#f4f4f6">00 0c 29 56 44 f9 00 0c  29 9e 0d ac 08 00 45 00</div>
<div class="a mono asc sy" style="left:1126.3px;top:382.80px;line-height:12.89px;color:#f4f4f6"><i>·</i><i>·</i>)VD<i>·</i><i>·</i><i>·</i> )<i>·</i><i>·</i><i>·</i><i>·</i><i>·</i>E<i>·</i></div>
<div class="a mono sy" style="left:737px;top:395.69px;line-height:12.89px;color:#8c8d92">0010</div>
<div class="a mono sy" style="left:778px;top:395.69px;line-height:12.89px;color:#f4f4f6">00 9d ab 41 40 00 80 06  58 71 ac 11 4f 81 ac 11</div>
<div class="a mono asc sy" style="left:1126.3px;top:395.69px;line-height:12.89px;color:#f4f4f6"><i>·</i><i>·</i><i>·</i>A@<i>·</i><i>·</i><i>·</i> Xq<i>·</i><i>·</i>O<i>·</i><i>·</i><i>·</i></div>
<div class="a mono sy" style="left:737px;top:408.58px;line-height:12.89px;color:#8c8d92">0020</div>
<div class="a mono sy" style="left:778px;top:408.58px;line-height:12.89px;color:#f4f4f6">4f 04 ec 7a 01 bd 99 41  1c 77 1d 49 c0 66 50 18</div>
<div class="a mono asc sy" style="left:1126.3px;top:408.58px;line-height:12.89px;color:#f4f4f6">O<i>·</i><i>·</i>z<i>·</i><i>·</i><i>·</i>A <i>·</i>w<i>·</i>I<i>·</i>fP<i>·</i></div>
<div class="a mono sy" style="left:737px;top:421.47px;line-height:12.89px;color:#8c8d92">0030</div>
<div class="a mono sy" style="left:778px;top:421.47px;line-height:12.89px;color:#f4f4f6">20 12 d3 78 00 00 00 00  00 71 fe 53 4d 42 40 00</div>
<div class="a mono asc sy" style="left:1126.3px;top:421.47px;line-height:12.89px;color:#f4f4f6"> <i>·</i><i>·</i>x<i>·</i><i>·</i><i>·</i><i>·</i> <i>·</i>q<i>·</i>SMB@<i>·</i></div>
<div class="a mono sy" style="left:737px;top:434.36px;line-height:12.89px;color:#8c8d92">0040</div>
<div class="a mono sy" style="left:778px;top:434.36px;line-height:12.89px;color:#f4f4f6">01 00 00 00 00 00 08 00  01 00 38 00 00 00 00 00</div>
<div class="a mono asc sy" style="left:1126.3px;top:434.36px;line-height:12.89px;color:#f4f4f6"><i>·</i><i>·</i><i>·</i><i>·</i><i>·</i><i>·</i><i>·</i><i>·</i> <i>·</i><i>·</i>8<i>·</i><i>·</i><i>·</i><i>·</i><i>·</i></div>
<div class="a mono sy" style="left:737px;top:447.25px;line-height:12.89px;color:#8c8d92">0050</div>
<div class="a mono sy" style="left:778px;top:447.25px;line-height:12.89px;color:#f4f4f6">00 00 08 00 00 00 00 00  00 00 ff fe 00 00 01 00</div>
<div class="a mono asc sy" style="left:1126.3px;top:447.25px;line-height:12.89px;color:#f4f4f6"><i>·</i><i>·</i><i>·</i><i>·</i><i>·</i><i>·</i><i>·</i><i>·</i> <i>·</i><i>·</i><i>·</i><i>·</i><i>·</i><i>·</i><i>·</i><i>·</i></div>
<div class="a mono sy" style="left:737px;top:460.14px;line-height:12.89px;color:#8c8d92">0060</div>
<div class="a mono sy" style="left:778px;top:460.14px;line-height:12.89px;color:#f4f4f6">00 00 35 00 00 00 00 54  00 00 30 fe 6a 69 d4 68</div>
<div class="a mono asc sy" style="left:1126.3px;top:460.14px;line-height:12.89px;color:#f4f4f6"><i>·</i><i>·</i>5<i>·</i><i>·</i><i>·</i><i>·</i>T <i>·</i><i>·</i>0<i>·</i>ji<i>·</i>h</div>
<div class="a mono sy" style="left:737px;top:473.03px;line-height:12.89px;color:#8c8d92">0070</div>
<div class="a mono sy" style="left:778px;top:473.03px;line-height:12.89px;color:#f4f4f6">c4 12 10 60 ec 12 1a d7  dd fa 31 00 50 00 3c 00</div>
<div class="a mono asc sy" style="left:1126.3px;top:473.03px;line-height:12.89px;color:#f4f4f6"><i>·</i><i>·</i><i>·</i>`<i>·</i><i>·</i><i>·</i><i>·</i> <i>·</i><i>·</i>1<i>·</i>P<i>·</i>&lt;<i>·</i></div>
<div class="a mono sy" style="left:737px;top:485.92px;line-height:12.89px;color:#8c8d92">0080</div>
<div class="a mono sy" style="left:778px;top:485.92px;line-height:12.89px;color:#f4f4f6">00 00 00 00 00 00 00 00  00 00 22 00 00 00 15 00</div>
<div class="a mono asc sy" style="left:1126.3px;top:485.92px;line-height:12.89px;color:#f4f4f6"><i>·</i><i>·</i><i>·</i><i>·</i><i>·</i><i>·</i><i>·</i><i>·</i> <i>·</i><i>·</i>&quot;<i>·</i><i>·</i><i>·</i><i>·</i><i>·</i></div>
<div class="a mono sy" style="left:737px;top:498.81px;line-height:12.89px;color:#8c8d92">0090</div>
<div class="a mono sy" style="left:778px;top:498.81px;line-height:12.89px;color:#f4f4f6">00 00 05 00 00 00 15 00  00 00 00 00 00 00 00 00</div>
<div class="a mono asc sy" style="left:1126.3px;top:498.81px;line-height:12.89px;color:#f4f4f6"><i>·</i><i>·</i><i>·</i><i>·</i><i>·</i><i>·</i><i>·</i><i>·</i> <i>·</i><i>·</i><i>·</i><i>·</i><i>·</i><i>·</i><i>·</i><i>·</i></div>
<div class="a mono sy" style="left:737px;top:511.70px;line-height:12.89px;color:#8c8d92">00a0</div>
<div class="a mono sy" style="left:778px;top:511.70px;line-height:12.89px;color:#f4f4f6">00 00 00 00 00 00 00 00  00 00 00</div>
<div class="a mono asc sy" style="left:1126.3px;top:511.70px;line-height:12.89px;color:#f4f4f6"><i>·</i><i>·</i><i>·</i><i>·</i><i>·</i><i>·</i><i>·</i><i>·</i> <i>·</i><i>·</i><i>·</i></div>
<div class="a" style="left:819.00px;top:512.00px;width:75.17px;height:12.89px;background:#2c7cf2"></div>
<div class="a mono sy" style="left:819.00px;top:511.70px;line-height:12.89px;color:#ffffff">00 00 00 00</div>
<div class="a" style="left:1139.97px;top:512.00px;width:27.34px;height:12.89px;background:#2c7cf2"></div>
<div class="a mono asc sy" style="left:1139.97px;top:511.70px;line-height:12.89px;color:#ffffff"><i style="color:#fff">····</i></div>
<div class="a" style="left:1px;top:668px;width:1452px;height:21px;background:#232531;border-top:1px solid #1a1b21;border-radius:0 0 3px 3px"></div>
<div class="a" style="left:11.3px;top:671.7px;width:10.5px;height:10.5px;border-radius:50%;background:#e2e05a;border:1px solid #c8c650"></div>
<svg class="a" style="left:28px;top:671px" width="12" height="12"><rect x="1" y="1.2" width="8" height="10" fill="#f2f2f0"/><path d="M1 1.2 H5 L1 5Z" fill="#3da5e8"/><path d="M3 8.6 L9.8 1.8" stroke="#222" stroke-width="1.3"/></svg>
<div class="a" style="left:52px;top:672px;font-size:10.3px;font-weight:bold;color:#f2f2f4;line-height:14px">ntlmrelay.pcapng</div>
<div class="a" style="left:946px;top:672px;width:0;height:13px;border-left:1px dotted #55575f"></div>
<div class="a" style="left:957px;top:672px;font-size:10.3px;font-weight:bold;color:#f2f2f4;line-height:14px">Packets: 1654</div>
<div class="a" style="left:1361px;top:672px;width:0;height:13px;border-left:1px dotted #55575f"></div>
<div class="a" style="left:1372px;top:672px;font-size:10.3px;font-weight:bold;color:#f2f2f4;line-height:14px">Profile: Default</div>
</body></html>
